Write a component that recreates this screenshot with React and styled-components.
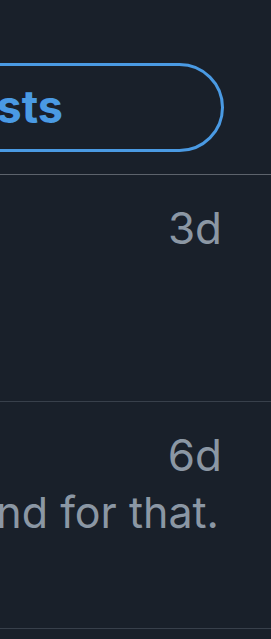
import React from 'react';
import styled, { createGlobalStyle } from 'styled-components';

const GlobalStyle = createGlobalStyle`
  html, body {
    margin: 0;
    padding: 0;
    background: #19202a;
    overflow: hidden;
  }
  body {
    font-family: Inter, 'Noto Sans', 'Liberation Sans', sans-serif;
  }
`;

const Page = styled.div`
  width: 271px;
  height: 639px;
  overflow: hidden;
  background: #19202a;
`;

const ButtonBar = styled.div`
  display: flex;
  justify-content: flex-end;
  align-items: flex-start;
  padding: 63px 47px 0 0;
  height: 175px;
  box-sizing: border-box;
  border-bottom: 1px solid #5d636c;
`;

const PillButton = styled.button`
  flex-shrink: 0;
  width: 520px;
  height: 89px;
  box-sizing: border-box;
  display: flex;
  align-items: center;
  justify-content: flex-end;
  padding: 0 0 2px 0;
  padding-right: 158px;
  border: 3px solid #4a9ae3;
  border-radius: 45px;
  background: transparent;
  color: #4a9ae3;
  font-family: inherit;
  font-size: 45px;
  font-weight: 700;
  white-space: nowrap;
`;

const Item = styled.div`
  height: 227px;
  box-sizing: border-box;
  padding: 26px 49px 0 0;
  border-bottom: 1px solid #38404b;
  display: flex;
  flex-direction: column;
  align-items: flex-end;
`;

const Time = styled.span`
  color: #8b97a4;
  font-size: 44px;
  line-height: 54px;
`;

const Body = styled.div`
  display: flex;
  justify-content: flex-end;
  width: 100%;
  margin: 4px 3px 0 0;
  color: #8b97a4;
  font-size: 43px;
  line-height: 52px;
  white-space: nowrap;
`;

const tweets = [
  { time: '3d', body: '' },
  { time: '6d', body: 'Thanks, I will keep that in mind for that.' },
];

export default function App() {
  return (
    <>
      <GlobalStyle />
      <Page>
        <ButtonBar>
          <PillButton>Discover new Lists</PillButton>
        </ButtonBar>
        {tweets.map((t, i) => (
          <Item key={i}>
            <Time>{t.time}</Time>
            {t.body && <Body>{t.body}</Body>}
          </Item>
        ))}
      </Page>
    </>
  );
}
